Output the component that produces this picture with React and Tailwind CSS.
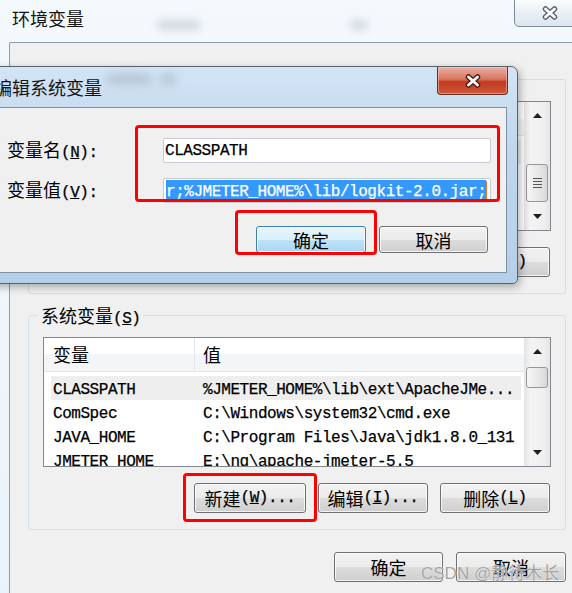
import React from 'react';

function M({ children }) {
  return (
    <span className="[font-family:'Liberation_Mono',monospace] text-[16px] tracking-[-0.45px] [-webkit-text-stroke:0.25px_currentColor]">
      {children}
    </span>
  );
}

function XGlyph({ dark = '#3d4650' }) {
  return (
    <svg width="18" height="14" viewBox="0 0 18 14">
      <path d="M4.5 3 L13.5 11 M13.5 3 L4.5 11" stroke={dark} strokeWidth="5.5" strokeLinecap="round" fill="none" />
      <path d="M4.5 3 L13.5 11 M13.5 3 L4.5 11" stroke="#fff" strokeWidth="2.8" strokeLinecap="round" fill="none" />
    </svg>
  );
}

function Btn({ children, className = '', primary }) {
  return (
    <div
      className={`flex items-center justify-center rounded-[3px] border text-[18px] leading-none text-black shadow-[inset_0_0_0_1px_rgba(255,255,255,0.75)] ${
        primary
          ? 'border-[#3c7fb1] bg-[linear-gradient(#e8f5fc,#d9effc_50%,#bfe3f8_50%,#a9d6f1)]'
          : 'border-[#707070] bg-[linear-gradient(#f2f2f2,#ebebeb_50%,#dddddd_50%,#cfcfcf)]'
      } ${className}`}
    >
      {children}
    </div>
  );
}

function Arrow({ down }) {
  return (
    <svg width="9" height="5" viewBox="0 0 9 5">
      <path d={down ? 'M0 0 L9 0 L4.5 5 Z' : 'M0 5 L9 5 L4.5 0 Z'} fill="#1e1e1e" />
    </svg>
  );
}

function ScrollBar({ thumbClass, grip }) {
  return (
    <div className="w-[26px] h-full shrink-0 flex flex-col bg-[linear-gradient(90deg,#e4e4e4,#f3f3f3_25%,#f0f0f0_75%,#e4e4e4)]">
      <div className="h-[27px] shrink-0 flex items-center justify-center">
        <Arrow />
      </div>
      <div className={`mx-[2px] rounded-[3px] border border-[#979797] bg-[linear-gradient(90deg,#f6f6f6,#e9e9e9_50%,#d8d8d8)] flex flex-col items-center justify-center gap-[2px] ${thumbClass}`}>
        {grip && (
          <>
            <div className="w-[9px] h-px bg-[#555]" />
            <div className="w-[9px] h-px bg-[#555]" />
            <div className="w-[9px] h-px bg-[#555]" />
            <div className="w-[9px] h-px bg-[#555]" />
          </>
        )}
      </div>
      <div className="mt-auto h-[27px] shrink-0 flex items-center justify-center">
        <Arrow down />
      </div>
    </div>
  );
}

function ListView({ rows, thumbClass, grip }) {
  return (
    <div className="w-[508px] h-[130px] border border-[#828790] bg-white flex overflow-hidden">
      <div className="flex-1 min-w-0 flex flex-col">
        <div className="h-[34px] shrink-0 flex bg-[linear-gradient(#ffffff_50%,#f4f5f7_50%)] border-b border-[#e2e4e7] text-[18px]">
          <div className="w-[151px] pl-[9px] flex items-center border-r border-[#e3e8ee]">变量</div>
          <div className="flex-1 pl-[8px] flex items-center">值</div>
        </div>
        <div className="pt-[4px]">
          {rows.map((r, i) => (
            <div
              key={i}
              className={`ml-[7px] mr-[3px] h-[24px] flex items-center whitespace-nowrap ${i === 0 ? 'bg-[#eeeeee]' : ''}`}
            >
              <div className="w-[152px] pl-[2px]"><M>{r[0]}</M></div>
              <div><M>{r[1]}</M></div>
            </div>
          ))}
        </div>
      </div>
      <ScrollBar thumbClass={thumbClass} grip={grip} />
    </div>
  );
}

const sysRows = [
  ['CLASSPATH', '%JMETER_HOME%\\lib\\ext\\ApacheJMe...'],
  ['ComSpec', 'C:\\Windows\\system32\\cmd.exe'],
  ['JAVA_HOME', 'C:\\Program Files\\Java\\jdk1.8.0_131'],
  ['JMETER_HOME', 'E:\\ng\\apache-jmeter-5.5'],
];

const userRows = [
  ['TEMP', '%USERPROFILE%\\AppData\\Local\\Temp'],
  ['TMP', '%USERPROFILE%\\AppData\\Local\\Temp'],
];

export default function App() {
  return (
    <div className="relative w-[572px] h-[593px] overflow-hidden bg-[linear-gradient(#f4f9fd,#eaf3fa)] [font-family:'Noto_Sans_CJK_SC',sans-serif] text-black">
      {/* glass blur behind caption */}
      <div className="absolute left-[157px] top-[20px] w-[44px] h-[10px] rounded-full bg-[#9aa6b2]/40 blur-[4px]" />
      <div className="absolute left-[350px] top-[20px] w-[18px] h-[10px] rounded-full bg-[#9aa6b2]/40 blur-[4px]" />

      {/* outer window caption */}
      <div className="h-[42px] flex items-start justify-between">
        <div className="pl-[12px] pt-[8px] text-[18px] leading-[21px] text-[#141414]">环境变量</div>
        <div className="-mt-px -mr-[13px] w-[71px] h-[28px] rounded-b-[5px] border border-[#7d8a99] bg-[linear-gradient(#fbfdfe,#e9eff5_50%,#dde6ee)] flex items-center justify-center">
          <XGlyph dark="#56606b" />
        </div>
      </div>

      {/* outer window client */}
      <div className="flex">
        <div className="w-[9px] shrink-0" />
        <div className="flex-1 h-[551px] bg-[#f0f0f0] border-l border-t border-[#8f9cab] rounded-tl-[2px] pl-[18px] pt-[36px] flex flex-col">
          {/* user variables group */}
          <div className="w-[538px] h-[215px] rounded-[3px] border border-[#d5dfe5] pl-[14px] pt-[21px] flex flex-col">
            <ListView rows={userRows} thumbClass="mt-[35px] h-[38px]" grip />
            <div className="mt-[16px] pr-[15px] flex justify-end gap-[12px]">
              <Btn className="w-[112px] h-[30px]">新建<M>(<u>N</u>)...</M></Btn>
              <Btn className="w-[110px] h-[30px]">编辑<M>(<u>E</u>)...</M></Btn>
              <Btn className="w-[110px] h-[30px]">删除<M>(<u>D</u>)</M></Btn>
            </div>
          </div>

          {/* system variables group */}
          <div className="relative mt-[21px] w-[538px] h-[215px] rounded-[3px] border border-[#d5dfe5] pl-[14px] pt-[21px] flex flex-col">
            <div className="absolute left-[9px] top-[-11px] px-[3px] bg-[#f0f0f0] text-[18px] leading-[21px]">
              系统变量<M>(<u>S</u>)</M>
            </div>
            <ListView rows={sysRows} thumbClass="mt-[2px] h-[21px]" />
            <div className="mt-[16px] pr-[15px] flex justify-end gap-[12px]">
              <div className="relative">
                <Btn className="w-[112px] h-[30px]">新建<M>(<u>W</u>)...</M></Btn>
                <div className="absolute left-[-11px] top-[-10px] w-[134px] h-[49px] rounded-[4px] border-[3px] border-[#ff0000]" />
              </div>
              <Btn className="w-[110px] h-[30px]">编辑<M>(<u>I</u>)...</M></Btn>
              <Btn className="w-[110px] h-[30px]">删除<M>(<u>L</u>)</M></Btn>
            </div>
          </div>

          {/* bottom buttons */}
          <div className="mt-[22px] ml-[306px] flex gap-[13px]">
            <Btn className="w-[109px] h-[30px]">确定</Btn>
            <Btn className="w-[110px] h-[30px]">取消</Btn>
          </div>
        </div>
      </div>

      {/* edit system variable dialog */}
      <div className="absolute left-[-12px] top-[66px] w-[530px] h-[218px] rounded-tr-[7px] rounded-br-[5px] border border-[#56626f] bg-[linear-gradient(#d3e4f4,#bfd6ec_40%,#b6cfe8)] shadow-[2px_3px_8px_rgba(0,0,0,0.3)] px-[10px] pb-[10px] flex flex-col">
        <div className="relative h-[40px] shrink-0 flex items-start justify-between">
          <div className="absolute left-[107px] top-[6px] w-[46px] h-[12px] rounded-full bg-[#8d9aa8]/35 blur-[4px]" />
          <div className="absolute left-[161px] top-[6px] w-[17px] h-[12px] rounded-full bg-[#8d9aa8]/35 blur-[4px]" />
          <div className="relative -ml-[5px] pt-[10px] text-[18px] leading-[21px] text-[#141414]">编辑系统变量</div>
          <div className="relative -mr-[1px] w-[71px] h-[28px] rounded-b-[4px] border border-t-0 border-[#6b2a1e] bg-[linear-gradient(#eab0a3,#d7755f_45%,#c3391e_55%,#cd5a3d)] shadow-[inset_0_0_0_1px_rgba(255,210,200,0.5)] flex items-center justify-center">
            <XGlyph dark="#4a1b12" />
          </div>
        </div>

        <div className="relative flex-1 bg-[#f0f0f0] border border-[#7d8fa3]">
          <div className="pt-[30px] flex items-center">
            <div className="w-[163px] pl-[7px] text-[18px] leading-none">变量名<M>(<u>N</u>):</M></div>
            <div className="w-[328px] h-[25px] bg-white border border-[#c5cbd3] rounded-[2px] pl-[1px] flex items-center">
              <M>CLASSPATH</M>
            </div>
          </div>
          <div className="pt-[15px] flex items-center">
            <div className="w-[163px] pl-[7px] text-[18px] leading-none">变量值<M>(<u>V</u>):</M></div>
            <div className="w-[328px] h-[25px] bg-white border border-[#c5cbd3] rounded-[2px] pl-[2px] flex items-center overflow-hidden whitespace-nowrap">
              <span className="bg-[#3399ff] text-white leading-[19px]">
                <M>{'r;%JMETER_HOME%\\lib/logkit-2.0.jar;'}</M>
              </span>
              <span className="w-px h-[19px] bg-[#e07a2a]" />
            </div>
          </div>
          <div className="pt-[23px] pl-[256px] flex gap-[13px]">
            <Btn primary className="w-[110px] h-[27px]">确定</Btn>
            <Btn className="w-[109px] h-[27px]">取消</Btn>
          </div>

          <div className="absolute left-[135px] top-[17px] w-[365px] h-[77px] rounded-[4px] border-[3px] border-[#ff0000]" />
          <div className="absolute left-[235px] top-[102px] w-[142px] h-[45px] rounded-[4px] border-[3px] border-[#ff0000]" />
        </div>
      </div>

      {/* watermark */}
      <div className="absolute left-[421px] top-[561px] text-[17px] leading-[22px] text-[#a4a4a4] [text-shadow:0_0_1px_#ffffff] whitespace-nowrap">
        <span className="[font-family:'Liberation_Sans',sans-serif]">CSDN @</span>静待木长
      </div>
    </div>
  );
}
